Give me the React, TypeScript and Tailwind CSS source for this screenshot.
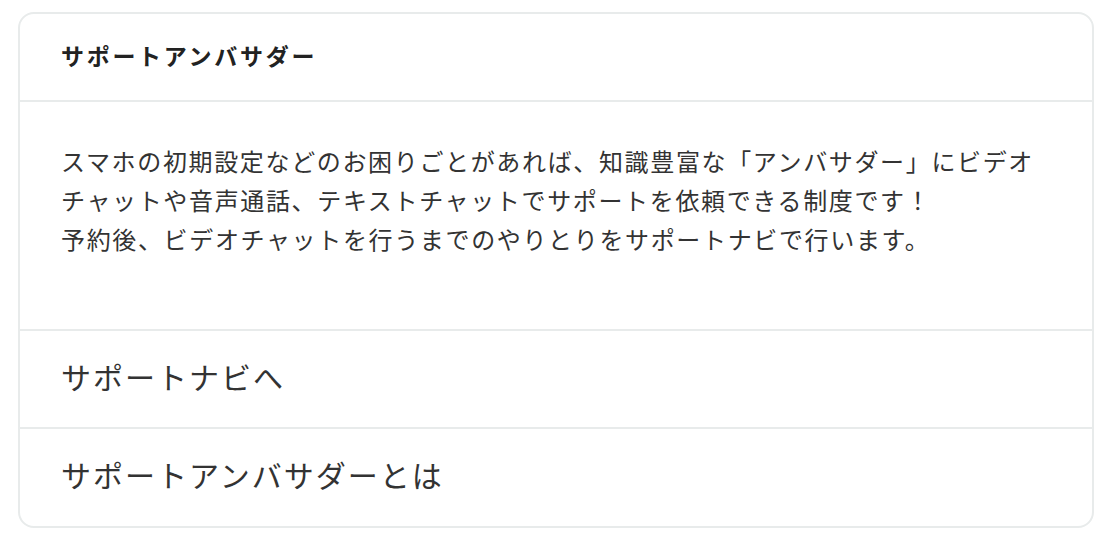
const links = ["サポートナビへ", "サポートアンバサダーとは"];

const App = () => {
  return (
    <div className="min-h-[550px] bg-white pt-[12px] px-[18px] font-['Noto_Sans_CJK_JP','Noto_Sans',sans-serif] text-[#333]">
      <div className="rounded-[16px] border-2 border-[#e8ebeb] overflow-hidden">
        <div className="h-[88px] flex items-center px-[41px] pb-[4px] border-b-2 border-[#e8ebeb]">
          <h2 className="text-[23px] leading-none font-bold tracking-[2.7px] text-[#222]">サポートアンバサダー</h2>
        </div>
        <div className="px-[41px] pt-[39px] pb-[71px] border-b-2 border-[#e8ebeb]">
          <p className="text-[24px] leading-[39px] tracking-[1.65px]">
            スマホの初期設定などのお困りごとがあれば、知識豊富な「アンバサダー」にビデオ
            <br />
            チャットや音声通話、テキストチャットでサポートを依頼できる制度です！
            <br />
            予約後、ビデオチャットを行うまでのやりとりをサポートナビで行います。
          </p>
        </div>
        {links.map((label, i) => (
          <div
            key={label}
            className={
              i === 0
                ? "h-[98px] flex items-center px-[41px] pb-[6px] border-b-2 border-[#e8ebeb]"
                : "h-[97px] flex items-center px-[41px] pb-[6px]"
            }
          >
            <span className="text-[30px] tracking-[2px]">{label}</span>
          </div>
        ))}
      </div>
    </div>
  );
};

export default App;
